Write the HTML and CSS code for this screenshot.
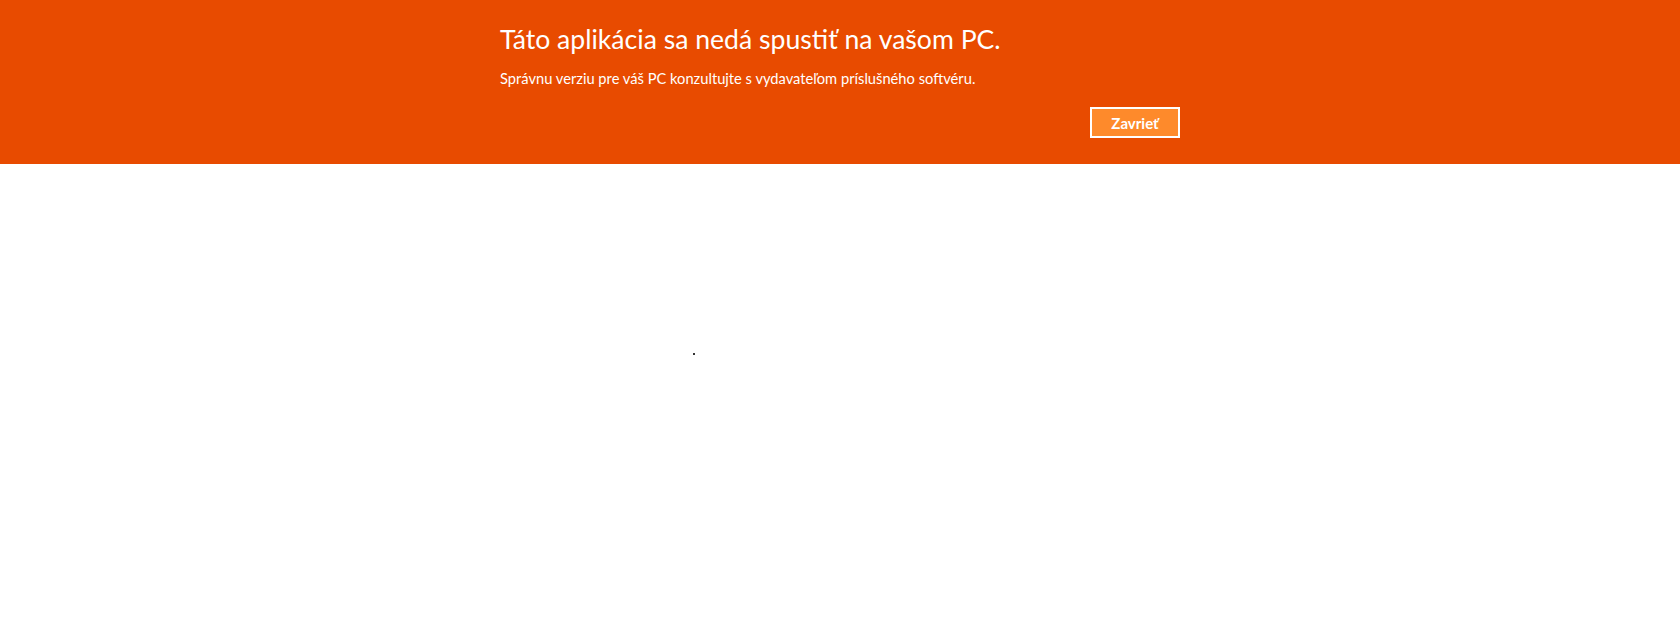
FILE: index.html
```html
<!DOCTYPE html>
<html lang="sk">
<head>
<meta charset="utf-8">
<link rel="stylesheet" href="styles.css">
</head>
<body>
<div class="banner">
  <div class="content">
    <h1 class="title">Táto aplikácia sa nedá spustiť na vašom PC.</h1>
    <p class="message">Správnu verziu pre váš PC konzultujte s vydavateľom príslušného softvéru.</p>
    <div class="actions">
      <button class="close-btn">Zavrieť</button>
    </div>
  </div>
</div>
<div class="desk">
  <span class="dot"></span>
</div>
</body>
</html>
```

FILE: styles.css
```css
html, body {
  margin: 0;
  padding: 0;
  background: #ffffff;
  font-family: "Lato", "Open Sans", sans-serif;
}
.banner {
  background: #e84b00;
  height: 164px;
  box-sizing: border-box;
  padding-left: 500px;
}
.content {
  width: 680px;
  display: flex;
  flex-direction: column;
}
.title {
  margin: 0;
  padding-top: 21px;
  font-size: 26.6px;
  font-weight: 400;
  line-height: 36px;
  color: #ffffff;
}
.message {
  margin: 0;
  padding-top: 11px;
  font-size: 14.7px;
  line-height: 20px;
  color: #ffffff;
}
.actions {
  display: flex;
  justify-content: flex-end;
  padding-top: 19px;
}
.close-btn {
  width: 90px;
  height: 31px;
  box-sizing: border-box;
  border: 2px solid #ffffff;
  background: #fe8a2b;
  color: #ffffff;
  font-family: "Lato", "Open Sans", sans-serif;
  font-size: 15px;
  font-weight: 700;
  padding: 0;
}
.desk {
  padding: 189px 0 0 693px;
}
.dot {
  display: block;
  width: 2px;
  height: 2px;
  background: #333333;
}
```
